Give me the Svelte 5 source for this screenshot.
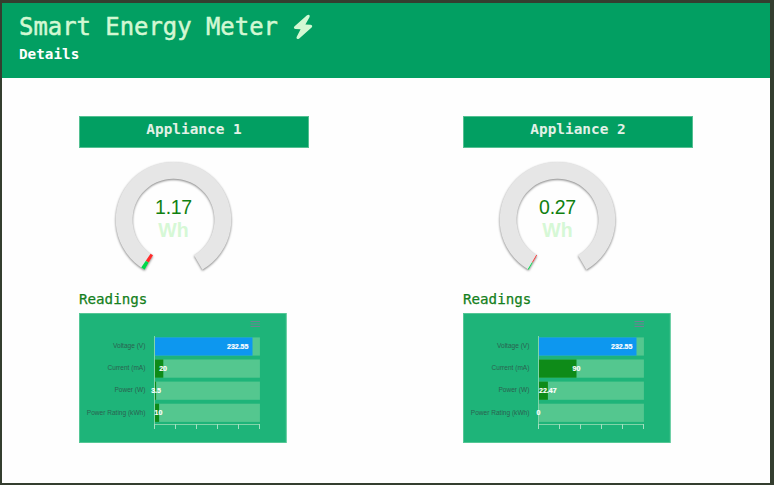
<script>
  const labels = ['Voltage (V)', 'Current (mA)', 'Power (W)', 'Power Rating (kWh)'];
  const appliances = [
    {
      name: 'Appliance 1', energy: '1.17', sweep: 4,
      bars: [
        { value: '232.55', width: 98, x: 158.7 },
        { value: '20', width: 8.8, x: 84.1 },
        { value: '3.5', width: 1.6, x: 77 },
        { value: '10', width: 4.6, x: 79.5 }
      ]
    },
    {
      name: 'Appliance 2', energy: '0.27', sweep: 1,
      bars: [
        { value: '232.55', width: 98, x: 158.7 },
        { value: '90', width: 38, x: 113.5 },
        { value: '22.47', width: 9.4, x: 84.8 },
        { value: '0', width: 0, x: 75.5 }
      ]
    }
  ];
  const ticks = [0, 1, 2, 3, 4, 5];

  // Ring segment clockwise from `from` to `to`, in degrees from the x axis.
  function ring(inner, outer, from, to) {
    const p = (r, a) => `${60 + r * Math.cos((a * Math.PI) / 180)} ${60 + r * Math.sin((a * Math.PI) / 180)}`;
    const large = to - from > 180 ? 1 : 0;
    return `M${p(outer, from)}A${outer} ${outer} 0 ${large} 1 ${p(outer, to)}L${p(inner, to)}A${inner} ${inner} 0 ${large} 0 ${p(inner, from)}Z`;
  }
</script>

<div class="page">
  <header>
    <h1>Smart Energy Meter
      <svg class="bolt" viewBox="0 0 20 26" width="20" height="26" aria-hidden="true">
        <path d="M14 1.2 1.6 12.2Q-.2 14.4 2.4 15L7.6 15.2 3.6 23Q3.2 26 6 24.7L18.6 13.6Q20.2 11.2 17.6 10.8L12.4 10.6 16.6 3Q17.2-.2 14 1.2Z" />
      </svg>
    </h1>
    <p>Details</p>
  </header>
  <main>
    {#each appliances as item}
      <section>
        <h2>{item.name}</h2>
        <svg class="gauge" width="120" height="120" viewBox="0.5 0.3 120 120">
          <path class="track" d={ring(41, 57.8, 120, 420)} />
          <path fill="#ff2a2a" d={ring(41, 49.5, 120, 120 + item.sweep)} />
          <path fill="#00d84a" d={ring(49.5, 57.8, 120, 120 + item.sweep)} />
          <text class="energy" x="60" y="54.3">{item.energy}</text>
          <text class="unit" x="60" y="77.3">Wh</text>
        </svg>
        <h3>Readings</h3>
        <svg class="chart" width="208" height="130" viewBox="0 0 208 130">
          <rect x="0.25" y="0.5" width="207" height="129" fill="#1eb479" stroke="#54c795" />
          <path d="M171.5 8.5h9.5M171.5 11h9.5M171.5 13.5h9.5" stroke="#6e8192" />
          {#each item.bars as bar, i}
            <rect x="75.5" y={24.4 + i * 22.1} width="105.4" height="18.2" fill="#54c78f" />
            <rect x="75.5" y={24.4 + i * 22.1} width={bar.width} height="18.2" fill={i === 0 ? '#0d97ef' : '#0e8b18'} />
            <text class="label" x="66.4" y={35.2 + i * 22.1}>{labels[i]}</text>
          {/each}
          <path d="M75.5 23v93M75.5 111.5H181" stroke="#82d4a9" fill="none" />
          {#each ticks as tick}
            <path d="M{75.5 + tick * 21} 111v5" stroke="#a3dfc0" />
          {/each}
          {#each item.bars as bar, i}
            <text class="value" x={bar.x} y={36.1 + i * 22.1}>{bar.value}</text>
          {/each}
        </svg>
      </section>
    {/each}
  </main>
</div>

<style>
  :global(body) { background: #35402f; }
  .page {
    box-sizing: border-box;
    width: 774px;
    height: 485px;
    border: solid #343e2f;
    border-width: 3px 4px 2px 2px;
    background: #fefefe;
    font-family: 'DejaVu Sans Mono', 'Liberation Mono', monospace;
    overflow: hidden;
  }
  header {
    box-sizing: border-box;
    height: 75px;
    padding: 8px 17px;
    background: #029f62;
  }
  h1 {
    display: flex;
    gap: 15px;
    align-items: center;
    margin: 0;
    height: 32px;
    color: #d3f8d3;
    font-size: 23.9px;
    font-weight: 400;
    line-height: 32px;
    -webkit-text-stroke: 0.5px #d3f8d3;
  }
  .bolt { fill: #d3f8d3; }
  p {
    margin: 1px 0 0;
    color: #fff;
    font-size: 14.3px;
    font-weight: 700;
    line-height: 20px;
  }
  main { display: flex; padding: 38px 77px; }
  section { width: 384px; flex: none; display: flex; flex-direction: column; }
  h2 {
    box-sizing: border-box;
    width: 230px;
    height: 32px;
    margin: 0;
    border: 1px solid #54c092;
    background: #029f62;
    color: #e2f1e7;
    font-size: 14.4px;
    font-weight: 700;
    line-height: 24px;
    text-align: center;
  }
  .gauge { margin: 12px 0 0 35px; overflow: visible; }
  .track {
    fill: #e6e6e6;
    filter: drop-shadow(0 1px 1px rgba(0, 0, 0, 0.5));
  }
  text { font-family: 'Liberation Sans', Arial, sans-serif; }
  .energy { font-size: 19.5px; letter-spacing: -0.3px; fill: #108010; text-anchor: middle; }
  .unit { font-size: 19.5px; font-weight: 700; fill: #d6f8d6; text-anchor: middle; }
  h3 {
    margin: 9px 0 4px;
    color: #148020;
    font-size: 14.2px;
    font-weight: 400;
    line-height: 20px;
    -webkit-text-stroke: 0.25px #148020;
  }
  .label { font-size: 6.55px; fill: #2b6250; text-anchor: end; }
  .value {
    font-size: 7px;
    font-weight: 700;
    fill: #fff;
    stroke: #fff;
    stroke-width: 0.2px;
    text-anchor: middle;
  }
</style>
